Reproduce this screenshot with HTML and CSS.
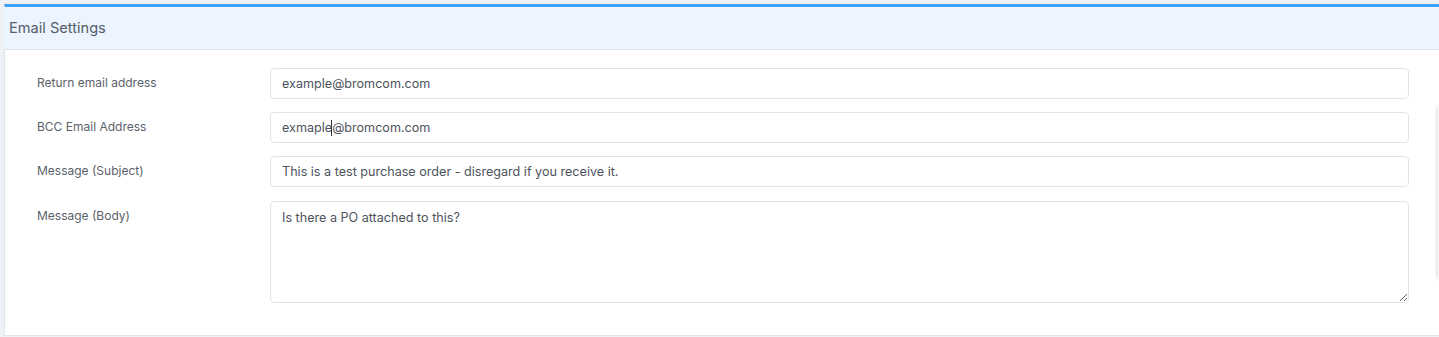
FILE: index.html
```html
<!DOCTYPE html>
<html lang="en">
<head>
<meta charset="utf-8">
<title>Email Settings</title>
<link rel="stylesheet" href="styles.css">
</head>
<body>
<section class="card">
  <header class="card-header">Email Settings</header>
  <div class="card-body">
    <label class="field-label" for="ret">Return email address</label>
    <input class="field-input" id="ret" type="text" value="example@bromcom.com">
    <label class="field-label" for="bcc">BCC Email Address</label>
    <div class="caret-wrap">
      <input class="field-input" id="bcc" type="text" value="exmaple@bromcom.com">
      <span class="caret"></span>
    </div>
    <label class="field-label" for="subj">Message (Subject)</label>
    <input class="field-input" id="subj" type="text" value="This is a test purchase order - disregard if you receive it.">
    <label class="field-label field-label-body" for="body">Message (Body)</label>
    <textarea class="field-input field-textarea" id="body">Is there a PO attached to this?</textarea>
  </div>
</section>
<div class="side-panel"></div>
</body>
</html>
```
FILE: styles.css
```css
html, body {
  margin: 0;
  padding: 0;
}
body {
  background: #eef1f5;
  font-family: Inter, "Noto Sans", sans-serif;
  width: 1439px;
  height: 337px;
  overflow: hidden;
  position: relative;
}
.card {
  margin: 4px -20px 0 4px;
  background: #fff;
  border: 1px solid #dfe4ea;
  border-top: 3px solid #3ba2f6;
  border-right: none;
}
.card-header {
  background: #ebf4ff;
  height: 42px;
  border-bottom: 1px solid #dfe4ea;
  display: flex;
  align-items: center;
  padding-left: 5px;
  font-size: 14.6px;
  color: #555d69;
  margin-left: -1px;
}
.card-body {
  display: grid;
  grid-template-columns: 233px 1139px;
  row-gap: 13px;
  padding: 18px 0 32px 32px;
}
.field-label {
  font-size: 12px;
  color: #5a616b;
  padding-top: 6px;
  line-height: 17px;
}
.field-label-body {
  margin-top: 1px;
}
.field-input {
  box-sizing: border-box;
  width: 1139px;
  height: 31px;
  border: 1px solid #e2e3e5;
  border-radius: 4px;
  padding: 0 11px;
  font-family: Inter, "Noto Sans", sans-serif;
  font-size: 12.6px;
  color: #4d535c;
  background: #fff;
  outline: none;
  margin: 0;
}
.field-textarea {
  height: 102px;
  margin-top: 1px;
  padding: 7px 11px;
  line-height: 18px;
  resize: vertical;
  display: block;
}
.caret-wrap {
  position: relative;
  height: 31px;
}
.caret {
  position: absolute;
  left: 61px;
  top: 8px;
  width: 1px;
  height: 16px;
  background: #333;
}
.side-panel {
  position: absolute;
  left: 1438px;
  top: 108px;
  width: 40px;
  height: 170px;
  background: #fff;
  box-shadow: 0 0 4px rgba(0, 0, 0, 0.25);
}
```
